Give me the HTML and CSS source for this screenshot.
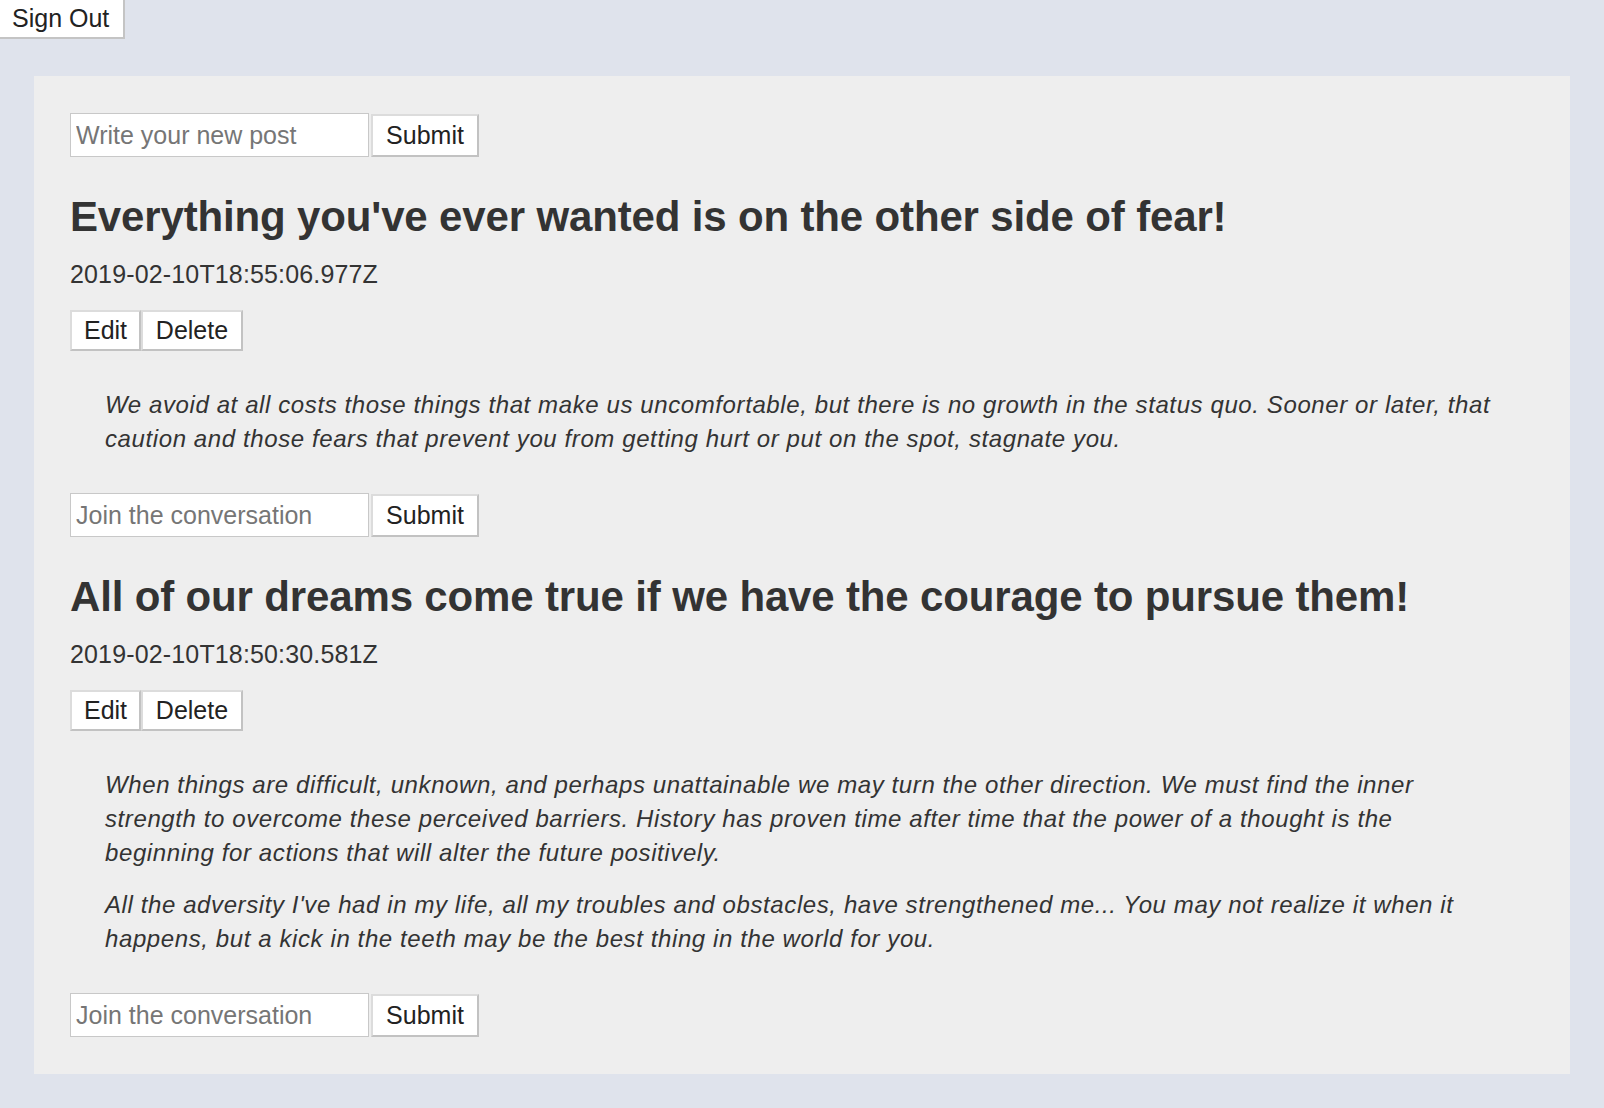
FILE: index.html
```html
<!DOCTYPE html>
<html lang="en">
<head>
<meta charset="utf-8">
<title>Posts</title>
<link rel="stylesheet" href="styles.css">
</head>
<body>
<button class="signout">Sign Out</button>
<main class="panel">
  <form class="composer">
    <input class="field" type="text" placeholder="Write your new post">
    <button class="btn submit" type="button">Submit</button>
  </form>

  <article class="post">
    <h2 class="post-title">Everything you've ever wanted is on the other side of fear!</h2>
    <div class="post-date">2019-02-10T18:55:06.977Z</div>
    <div class="post-actions">
      <button class="btn action edit">Edit</button><button class="btn action delete">Delete</button>
    </div>
    <blockquote class="post-body">
      <p>We avoid at all costs those things that make us uncomfortable, but there is no growth in the status quo. Sooner or later, that caution and those fears that prevent you from getting hurt or put on the spot, stagnate you.</p>
    </blockquote>
    <form class="composer comment">
      <input class="field" type="text" placeholder="Join the conversation">
      <button class="btn submit" type="button">Submit</button>
    </form>
  </article>

  <article class="post">
    <h2 class="post-title">All of our dreams come true if we have the courage to pursue them!</h2>
    <div class="post-date">2019-02-10T18:50:30.581Z</div>
    <div class="post-actions">
      <button class="btn action edit">Edit</button><button class="btn action delete">Delete</button>
    </div>
    <blockquote class="post-body">
      <p>When things are difficult, unknown, and perhaps unattainable we may turn the other direction. We must find the inner strength to overcome these perceived barriers. History has proven time after time that the power of a thought is the beginning for actions that will alter the future positively.</p>
      <p>All the adversity I've had in my life, all my troubles and obstacles, have strengthened me... You may not realize it when it happens, but a kick in the teeth may be the best thing in the world for you.</p>
    </blockquote>
    <form class="composer comment">
      <input class="field" type="text" placeholder="Join the conversation">
      <button class="btn submit" type="button">Submit</button>
    </form>
  </article>
</main>
</body>
</html>
```

FILE: styles.css
```css
html, body {
  margin: 0;
  padding: 0;
}
body {
  background: #dfe3ec;
  font-family: "Liberation Sans", Arial, Helvetica, sans-serif;
  color: #333333;
  min-height: 1108px;
  box-sizing: border-box;
  overflow: hidden;
}
.signout {
  display: block;
  height: 39px;
  width: 125px;
  padding: 0 0 0 12px;
  text-align: left;
  margin: 0;
  font-family: inherit;
  font-size: 25px;
  color: #222;
  background: #ffffff;
  border: 0;
  border-right: 2px solid #c4c4c4;
  border-bottom: 2px solid #c4c4c4;
  box-sizing: border-box;
}
.panel {
  margin: 37px 34px 34px 34px;
  padding: 37px 36px 37px 36px;
  background: #eeeeee;
}
.composer {
  display: flex;
  align-items: flex-end;
  gap: 2px;
  margin: 0;
}
.field {
  width: 299px;
  height: 44px;
  box-sizing: border-box;
  border: 1px solid #c8c8c8;
  background: #ffffff;
  padding: 0 5px;
  margin: 0;
  font-family: inherit;
  font-size: 25px;
  color: #333;
  outline: none;
}
.field::placeholder {
  color: #767676;
}
.btn {
  box-sizing: border-box;
  background: #ffffff;
  margin: 0;
  padding: 0;
  font-family: inherit;
  font-size: 25px;
  color: #222;
  border: 2px solid;
  border-color: #dcdcdc #c2c2c2 #c2c2c2 #dcdcdc;
  border-radius: 0;
}
.submit {
  width: 108px;
  height: 43px;
}
.post-title {
  margin: 35px 0 0 0;
  font-size: 42px;
  letter-spacing: -0.15px;
  line-height: 50px;
  font-weight: bold;
  color: #333333;
}
.post-date {
  margin-top: 18px;
  font-size: 25px;
  letter-spacing: 0.15px;
  line-height: 28px;
}
.post-actions {
  display: flex;
  margin-top: 22px;
}
.action {
  height: 41px;
}
.edit {
  width: 71px;
}
.delete {
  width: 102px;
}
.post-body {
  margin: 37px 35px 0 35px;
  font-style: italic;
  font-size: 24px;
  letter-spacing: 0.6px;
  line-height: 34px;
}
.post-body p {
  margin: 0;
}
.post-body p + p {
  margin-top: 18px;
}
.comment {
  margin-top: 37px;
}
```
